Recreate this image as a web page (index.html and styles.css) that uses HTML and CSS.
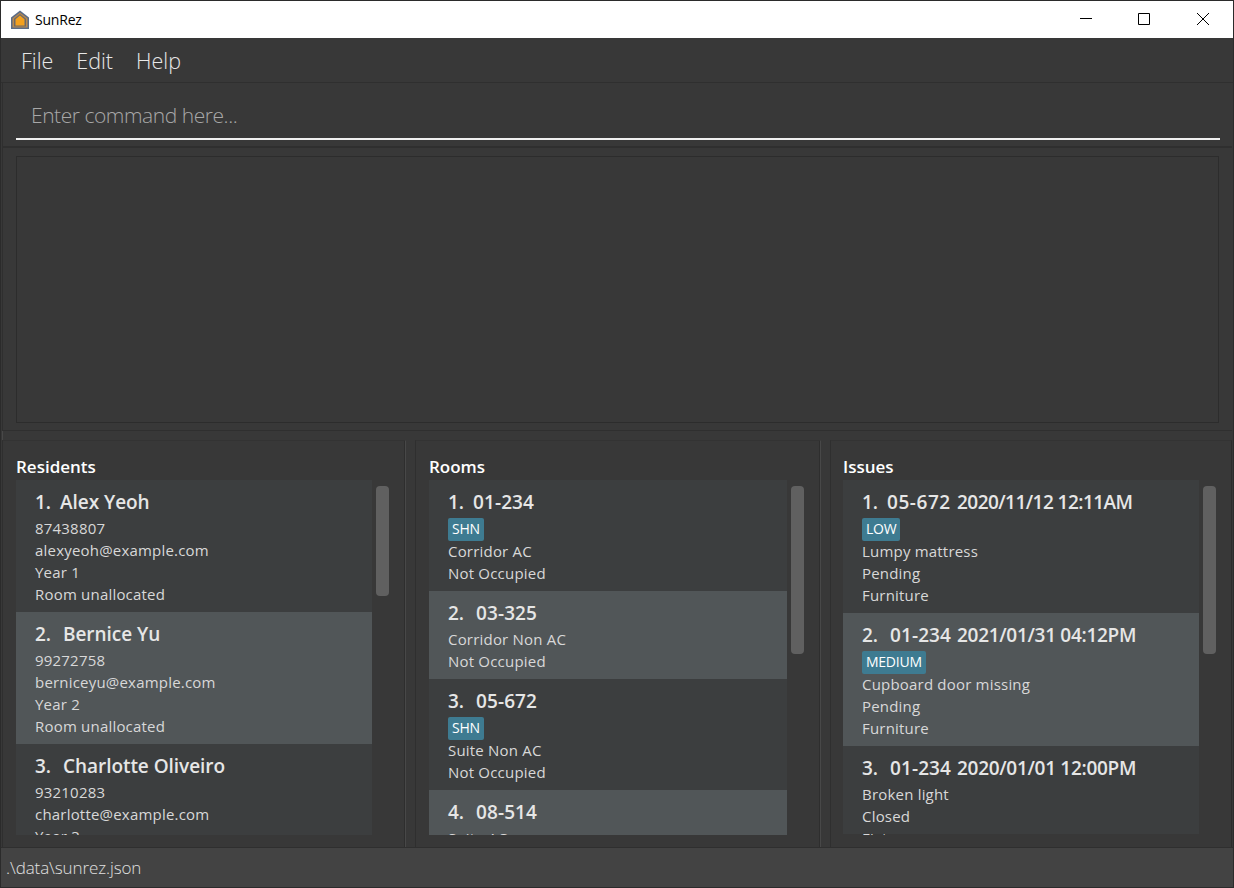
FILE: index.html
```html
<!DOCTYPE html>
<html lang="en">
<head>
<meta charset="utf-8">
<title>SunRez</title>
<link rel="stylesheet" href="styles.css">
</head>
<body>
<div class="window">
  <header class="titlebar">
    <svg class="app-icon" width="20" height="20" viewBox="0 0 20 20">
      <path d="M10 .5 19 7.500V19H1V7.500Z" fill="#5b6c88"/>
      <path d="M10 2.500 17.500 8.300V17.500H2.500V8.300Z" fill="#b98a4e"/>
      <path d="M10 4 16 8.700V16.500H4V8.700Z" fill="#6f6a68"/>
      <path d="M10 5.500 14.500 9.200V15.500H5.500V9.200Z" fill="#f5a11e"/>
    </svg>
    <span class="app-name">SunRez</span>
    <div class="win-controls">
      <svg width="12" height="12" viewBox="0 0 12 12"><path d="M0 5.500H12" stroke="#000" fill="none"/></svg>
      <svg width="12" height="12" viewBox="0 0 12 12"><path d="M.5 .5H11.500V11.500H.5Z" stroke="#000" fill="none"/></svg>
      <svg class="close-icon" width="12" height="12" viewBox="0 0 12 12"><path d="M0 0 12 12M12 0 0 12" stroke="#000" fill="none"/></svg>
    </div>
  </header>
  <nav class="menubar">
    <span class="menu-item">File</span>
    <span class="menu-item">Edit</span>
    <span class="menu-item">Help</span>
  </nav>
  <section class="command-pane">
    <div class="command-input">Enter command here...</div>
  </section>
  <section class="result-pane">
    <div class="result-box"></div>
  </section>
  <main class="lists">
    <section class="list-pane residents">
      <h2 class="pane-title">Residents</h2>
      <div class="list-body">
        <div class="cards">
          <article class="card odd r">
            <div class="card-title"><span class="num one">1.</span><span class="name">Alex Yeoh</span></div>
            <div class="line">87438807</div>
            <div class="line">alexyeoh@example.com</div>
            <div class="line">Year 1</div>
            <div class="line">Room unallocated</div>
          </article>
          <article class="card even r">
            <div class="card-title"><span class="num">2.</span><span class="name">Bernice Yu</span></div>
            <div class="line">99272758</div>
            <div class="line">berniceyu@example.com</div>
            <div class="line">Year 2</div>
            <div class="line">Room unallocated</div>
          </article>
          <article class="card odd r">
            <div class="card-title"><span class="num">3.</span><span class="name">Charlotte Oliveiro</span></div>
            <div class="line">93210283</div>
            <div class="line">charlotte@example.com</div>
            <div class="line">Year 3</div>
            <div class="line">Room unallocated</div>
          </article>
        </div>
        <div class="track"><div class="thumb short"></div></div>
      </div>
    </section>
    <section class="list-pane rooms">
      <h2 class="pane-title">Rooms</h2>
      <div class="list-body">
        <div class="cards">
          <article class="card odd">
            <div class="card-title"><span class="num one">1.</span><span class="code">01-234</span></div>
            <div class="tags"><span class="tag">SHN</span></div>
            <div class="line">Corridor AC</div>
            <div class="line">Not Occupied</div>
          </article>
          <article class="card even">
            <div class="card-title"><span class="num">2.</span><span class="code">03-325</span></div>
            <div class="line">Corridor Non AC</div>
            <div class="line">Not Occupied</div>
          </article>
          <article class="card odd">
            <div class="card-title"><span class="num">3.</span><span class="code">05-672</span></div>
            <div class="tags"><span class="tag">SHN</span></div>
            <div class="line">Suite Non AC</div>
            <div class="line">Not Occupied</div>
          </article>
          <article class="card even">
            <div class="card-title"><span class="num">4.</span><span class="code">08-514</span></div>
            <div class="line">Suite AC</div>
            <div class="line">Not Occupied</div>
          </article>
        </div>
        <div class="track"><div class="thumb long"></div></div>
      </div>
    </section>
    <section class="list-pane issues">
      <h2 class="pane-title">Issues</h2>
      <div class="list-body">
        <div class="cards">
          <article class="card odd">
            <div class="card-title"><span class="num one">1.</span><span class="code">05-672</span><span class="date ones">2020/11/12 12:11AM</span></div>
            <div class="tags"><span class="tag">LOW</span></div>
            <div class="line">Lumpy mattress</div>
            <div class="line">Pending</div>
            <div class="line">Furniture</div>
          </article>
          <article class="card even">
            <div class="card-title"><span class="num">2.</span><span class="code">01-234</span><span class="date">2021/01/31 04:12PM</span></div>
            <div class="tags"><span class="tag">MEDIUM</span></div>
            <div class="line">Cupboard door missing</div>
            <div class="line">Pending</div>
            <div class="line">Furniture</div>
          </article>
          <article class="card odd">
            <div class="card-title"><span class="num">3.</span><span class="code">01-234</span><span class="date">2020/01/01 12:00PM</span></div>
            <div class="line">Broken light</div>
            <div class="line">Closed</div>
            <div class="line">Fixture</div>
          </article>
        </div>
        <div class="track"><div class="thumb long"></div></div>
      </div>
    </section>
  </main>
  <footer class="statusbar">.\data\sunrez.json</footer>
</div>
</body>
</html>
```
FILE: styles.css
```css
* { box-sizing: border-box; }
html, body { margin: 0; height: 100%; overflow: hidden; }
body { font-family: "Open Sans", "Noto Sans", sans-serif; background: #383838; }
.window { width: 1234px; height: 888px; display: flex; flex-direction: column; border: 1px solid #2b2b2b; background: #383838; }

.titlebar { height: 37px; flex: none; background: #fff; display: flex; align-items: center; padding-left: 9px; }
.app-icon { flex: none; }
.app-name { margin-left: 5px; font-size: 14px; color: #000; letter-spacing: -0.2px; }
.win-controls { margin-left: auto; display: flex; gap: 46px; padding: 0 24px 0 0; align-self: flex-start; margin-top: 12px; }
.win-controls svg { display: block; }
.close-icon { margin-left: 1px; }

.menubar { height: 45px; flex: none; display: flex; align-items: center; padding: 0 0 0 20px; gap: 23px; border-bottom: 1px solid #2f2f2f; }
.menu-item { font-size: 21.5px; font-weight: 300; color: #e8e8e8; }

.command-pane { height: 65px; flex: none; padding: 0 12px 0 13px; margin: 0 1px; border-left: 1px solid #2f2f2f; border-bottom: 2px solid #2f2f2f; display: flex; flex-direction: column; }
.command-input { height: 57px; flex: none; border-bottom: 2px solid #f0f0f0; font-size: 21px; font-weight: 300; color: #a8a8a8; padding: 17px 0 0 15px; letter-spacing: -0.45px; line-height: 30px; }

.result-pane { height: 283px; flex: none; padding: 8px 13px 7px 13px; margin: 0 1px; border-left: 1px solid #2f2f2f; border-bottom: 1px solid #2f2f2f; }
.result-box { height: 100%; border: 1px solid #2c2c2c; }

.lists { flex: 1; min-height: 0; display: flex; padding: 9px 0 0 0; background: linear-gradient(#484848, #484848) 1px 0 / 1px 10px no-repeat; }
.list-pane { display: flex; flex-direction: column; min-width: 0; border-top: 1px solid #333; border-right: 1px solid #484848; border-left: 1px solid #2f2f2f; padding-top: 14px; box-shadow: inset -1px 0 0 #2e2e2e; }
.residents { width: 404px; margin-left: 1px; padding-left: 13px; }
.rooms { width: 406px; margin-left: 9px; padding-left: 13px; }
.issues { width: 402px; margin-left: 9px; padding-left: 12px; border-right-color: #2c2c2c; box-shadow: none; }
.pane-title { margin: 0; height: 25px; font-size: 17px; line-height: 24px; font-weight: 600; color: #fff; }

.list-body { flex: 1; min-height: 0; display: flex; padding-bottom: 12px; }
.cards { overflow: hidden; flex: none; }
.residents .cards, .issues .cards { width: 356px; }
.rooms .cards { width: 358px; }
.track { width: 13px; margin-left: 4px; padding-top: 6px; flex: none; }
.thumb { width: 13px; background: #606060; border-radius: 4px; }
.thumb.short { height: 110px; }
.thumb.long { height: 168px; }

.card { padding: 8px 0 0 19px; height: 88px; }
.card:has(.tags) { height: 111px; }
.r.card { height: 132px; }
.issues .card:has(.tags) { height: 133px; }
.odd { background: #3c3e3f; }
.even { background: #515658; }
.card-title { display: flex; height: 29px; font-size: 19px; line-height: 29px; font-weight: 600; color: #e6e6e6; white-space: nowrap; }
.num { width: 28px; flex: none; }
.num.one { width: 25px; }
.name { letter-spacing: -0.05px; }
.code { letter-spacing: 0.1px; }
.issues .code { width: 67px; flex: none; }
.issues .one + .code { width: 70px; letter-spacing: 0.55px; }
.date { letter-spacing: -0.3px; }
.date.ones { letter-spacing: -0.55px; }
.line { height: 22px; font-size: 15px; line-height: 22px; color: #d8d8d8; letter-spacing: 0.2px; white-space: nowrap; }
.tags { height: 23px; }
.tag { display: inline-block; height: 23px; padding: 0 4px; font-size: 14px; line-height: 22px; color: #fff; background: #3e7b91; border-radius: 2px; letter-spacing: -0.25px; }

.statusbar { height: 40px; flex: none; background: #434343; border-top: 1px solid #2f2f2f; font-size: 17px; font-weight: 300; color: #e0e0e0; padding: 8px 0 0 5px; line-height: 24px; letter-spacing: -0.1px; }
```
